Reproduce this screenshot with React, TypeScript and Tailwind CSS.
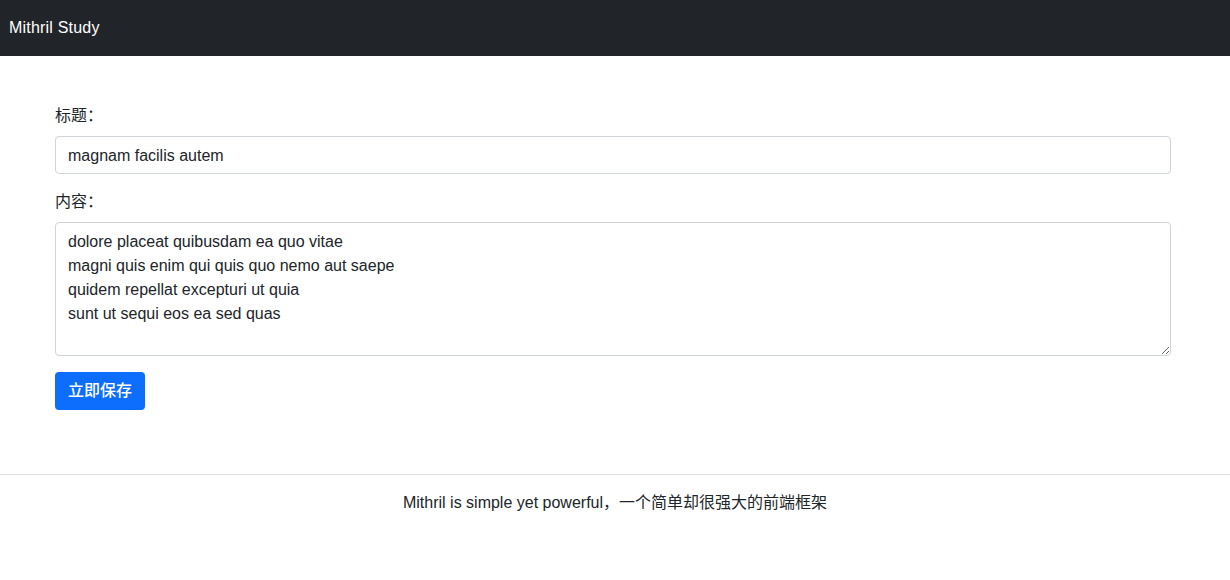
import { useState } from "react";

const font = "font-['Liberation_Sans','Noto_Sans_CJK_SC',sans-serif]";

export default function App() {
    const [title, setTitle] = useState("magnam facilis autem");
    const [body, setBody] = useState(
        "dolore placeat quibusdam ea quo vitae\nmagni quis enim qui quis quo nemo aut saepe\nquidem repellat excepturi ut quia\nsunt ut sequi eos ea sed quas"
    );

    return (
        <div className={`${font} min-h-[580px] bg-white text-[#212529] text-base leading-6`}>
            <nav className="h-14 bg-[#212529] flex items-center px-[9px]">
                <span className="text-white text-base tracking-[0.2px]">Mithril Study</span>
            </nav>

            <main className="ml-[55px] w-[1116px] pt-12">
                <div className="mb-4">
                    <label className="block mb-2">标题：</label>
                    <input
                        value={title}
                        onChange={(e) => setTitle(e.target.value)}
                        className="block w-full h-[38px] px-3 pt-[7px] pb-[5px] border border-[#ced4da] rounded-[4px] text-base leading-6 text-[#212529] outline-none"
                    />
                </div>
                <div className="mb-4">
                    <label className="block mb-2">内容：</label>
                    <textarea
                        rows={5}
                        value={body}
                        onChange={(e) => setBody(e.target.value)}
                        className="block w-full h-[134px] px-3 pt-[7px] pb-[5px] border border-[#ced4da] rounded-[4px] text-base leading-6 text-[#212529] outline-none resize-y"
                    />
                </div>
                <button className="h-[38px] w-[90px] bg-[#0d6efd] text-white rounded-[4px] text-base leading-6 font-medium">
                    立即保存
                </button>
            </main>

            <footer className="mt-16 border-t border-[#dee2e6] pt-4 text-center">
                Mithril is simple yet powerful，一个简单却很强大的前端框架
            </footer>
        </div>
    );
}
